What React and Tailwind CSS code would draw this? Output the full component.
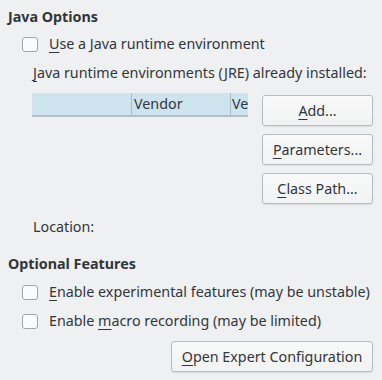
import React from 'react';

const Mn = ({ children }) => <span className="underline underline-offset-[3px] decoration-1">{children}</span>;

const Check = ({ children }) => (
  <div className="flex items-center h-5">
    <div className="w-4 h-[15px] rounded-[3px] border border-[#a3a5a7] bg-[#fbfbfb] shrink-0" />
    <span className="ml-[11px] whitespace-nowrap">{children}</span>
  </div>
);

const Btn = ({ children, className = '' }) => (
  <button className={`h-[31px] rounded-[3px] border border-[#b9bbbd] bg-gradient-to-b from-[#f9f9f9] to-[#f1f2f2] shadow-[0_1px_1px_rgba(0,0,0,0.08)] text-[#31363b] ${className}`}>
    {children}
  </button>
);

export default function App() {
  return (
    <div className="w-[382px] h-[380px] bg-[#eff0f1] text-[#31363b] text-[14.3px] leading-5 pl-2 pr-[9px] pt-[7px] font-['Noto_Sans',sans-serif] overflow-hidden">
      <div className="font-bold h-5">Java Options</div>

      <div className="mt-[7px] ml-[14px]">
        <Check><Mn>U</Mn>se a Java runtime environment</Check>
      </div>

      <div className="mt-[9px] ml-[25px] h-5 whitespace-nowrap">
        <Mn>J</Mn>ava runtime environments (JRE) already installed:
      </div>

      <div className="mt-[10px] ml-6 flex gap-[14px]">
        <div className="w-[216px]">
          <div className="h-6 bg-[#cde3ee] flex border-b-2 border-[#b8bdc0]">
            <div className="w-[100px] shrink-0 border-r border-[#a9bdc8]" />
            <div className="w-[99px] shrink-0 border-r border-[#a9bdc8] pl-[2px] leading-[22px]">Vendor</div>
            <div className="pl-[1px] leading-[22px] whitespace-nowrap">Ve</div>
          </div>
        </div>
        <div className="flex flex-col gap-2 pt-[2px] w-[111px]">
          <Btn><Mn>A</Mn>dd...</Btn>
          <Btn><Mn>P</Mn>arameters...</Btn>
          <Btn><Mn>C</Mn>lass Path...</Btn>
        </div>
      </div>

      <div className="mt-[13px] ml-[25px] h-5">Location:</div>

      <div className="mt-[17px] font-bold h-5">Optional Features</div>

      <div className="mt-2 ml-[14px]">
        <Check><Mn>E</Mn>nable experimental features (may be unstable)</Check>
      </div>
      <div className="mt-[9px] ml-[14px]">
        <Check>Enable <Mn>m</Mn>acro recording (may be limited)</Check>
      </div>

      <div className="mt-[10px] flex justify-end">
        <Btn className="w-[202px] h-[30px]"><Mn>O</Mn>pen Expert Configuration</Btn>
      </div>
    </div>
  );
}
